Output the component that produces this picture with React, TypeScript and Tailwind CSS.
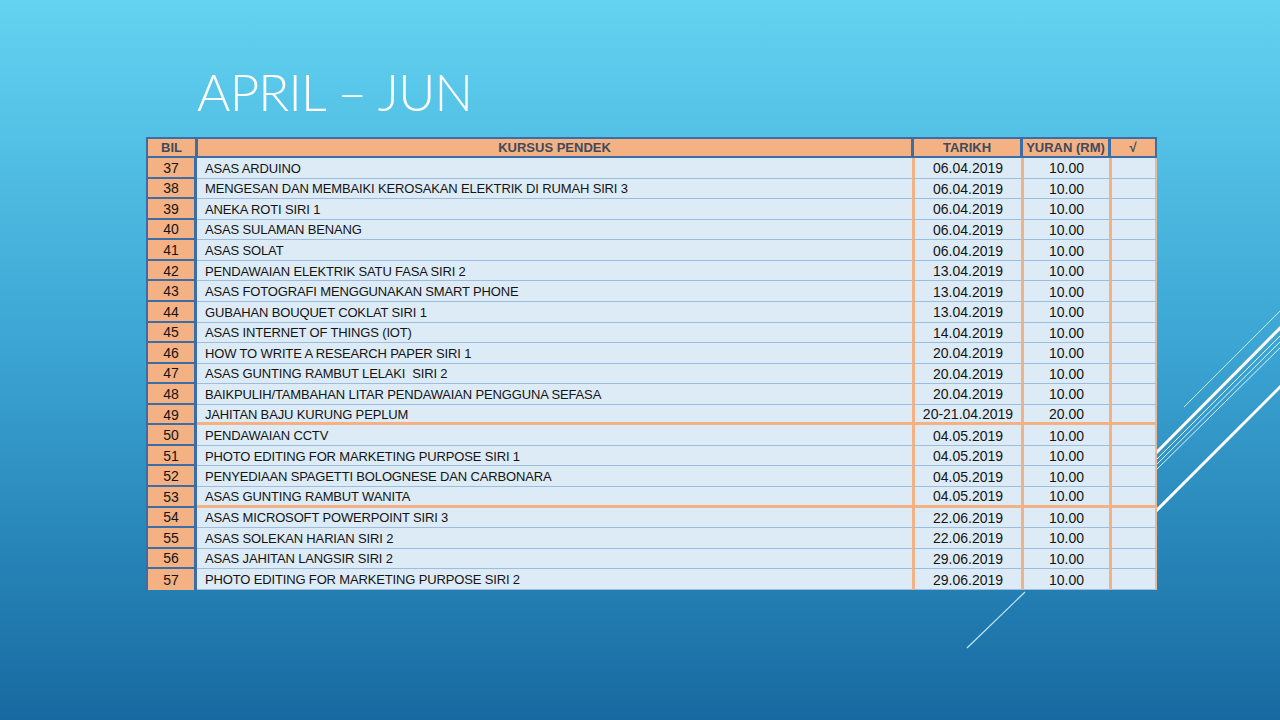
import React from 'react';

type Row = { bil: number; kursus: string; tarikh: string; yuran: string; groupEnd?: boolean };

const rows: Row[] = [
  { bil: 37, kursus: 'ASAS ARDUINO', tarikh: '06.04.2019', yuran: '10.00' },
  { bil: 38, kursus: 'MENGESAN DAN MEMBAIKI KEROSAKAN ELEKTRIK DI RUMAH SIRI 3', tarikh: '06.04.2019', yuran: '10.00' },
  { bil: 39, kursus: 'ANEKA ROTI SIRI 1', tarikh: '06.04.2019', yuran: '10.00' },
  { bil: 40, kursus: 'ASAS SULAMAN BENANG', tarikh: '06.04.2019', yuran: '10.00' },
  { bil: 41, kursus: 'ASAS SOLAT', tarikh: '06.04.2019', yuran: '10.00' },
  { bil: 42, kursus: 'PENDAWAIAN ELEKTRIK SATU FASA SIRI 2', tarikh: '13.04.2019', yuran: '10.00' },
  { bil: 43, kursus: 'ASAS FOTOGRAFI MENGGUNAKAN SMART PHONE', tarikh: '13.04.2019', yuran: '10.00' },
  { bil: 44, kursus: 'GUBAHAN BOUQUET COKLAT SIRI 1', tarikh: '13.04.2019', yuran: '10.00' },
  { bil: 45, kursus: 'ASAS INTERNET OF THINGS (IOT)', tarikh: '14.04.2019', yuran: '10.00' },
  { bil: 46, kursus: 'HOW TO WRITE A RESEARCH PAPER SIRI 1', tarikh: '20.04.2019', yuran: '10.00' },
  { bil: 47, kursus: 'ASAS GUNTING RAMBUT LELAKI  SIRI 2', tarikh: '20.04.2019', yuran: '10.00' },
  { bil: 48, kursus: 'BAIKPULIH/TAMBAHAN LITAR PENDAWAIAN PENGGUNA SEFASA', tarikh: '20.04.2019', yuran: '10.00' },
  { bil: 49, kursus: 'JAHITAN BAJU KURUNG PEPLUM', tarikh: '20-21.04.2019', yuran: '20.00', groupEnd: true },
  { bil: 50, kursus: 'PENDAWAIAN CCTV', tarikh: '04.05.2019', yuran: '10.00' },
  { bil: 51, kursus: 'PHOTO EDITING FOR MARKETING PURPOSE SIRI 1', tarikh: '04.05.2019', yuran: '10.00' },
  { bil: 52, kursus: 'PENYEDIAAN SPAGETTI BOLOGNESE DAN CARBONARA', tarikh: '04.05.2019', yuran: '10.00' },
  { bil: 53, kursus: 'ASAS GUNTING RAMBUT WANITA', tarikh: '04.05.2019', yuran: '10.00', groupEnd: true },
  { bil: 54, kursus: 'ASAS MICROSOFT POWERPOINT SIRI 3', tarikh: '22.06.2019', yuran: '10.00' },
  { bil: 55, kursus: 'ASAS SOLEKAN HARIAN SIRI 2', tarikh: '22.06.2019', yuran: '10.00' },
  { bil: 56, kursus: 'ASAS JAHITAN LANGSIR SIRI 2', tarikh: '29.06.2019', yuran: '10.00' },
  { bil: 57, kursus: 'PHOTO EDITING FOR MARKETING PURPOSE SIRI 2', tarikh: '29.06.2019', yuran: '10.00' },
];

function Decoration() {
  return (
    <svg className="absolute inset-0 z-0" width="1280" height="720" viewBox="0 0 1280 720">
      <line x1="1184" y1="407" x2="1290" y2="301" stroke="#c9eefa" strokeWidth="1" />
      <line x1="1150" y1="459" x2="1290" y2="318" stroke="#ffffff" strokeWidth="3" />
      <line x1="1150" y1="466" x2="1290" y2="326" stroke="#e6f7fd" strokeWidth="1" />
      <line x1="1150" y1="471" x2="1290" y2="332" stroke="#d6f2fb" strokeWidth="1" />
      <line x1="1150" y1="476" x2="1290" y2="338" stroke="#d6f2fb" strokeWidth="1" />
      <line x1="1150" y1="517" x2="1290" y2="377" stroke="#ffffff" strokeWidth="3" />
      <line x1="967" y1="648" x2="1025" y2="592" stroke="#bfeaf8" strokeWidth="1.2" />
    </svg>
  );
}

export default function App() {
  return (
    <div className="relative w-[1280px] h-[720px] overflow-hidden bg-gradient-to-b from-[#63d3f1] via-[#3aa3d2] to-[#176aa1]">
      <Decoration />
      <div className="relative z-10 pt-[64px]">
        <h1
          className="pl-[197px] text-[51px] leading-[56px] font-light text-white tracking-[-0.8px]"
          style={{ fontFamily: 'Lato, "Open Sans", sans-serif' }}
        >
          APRIL – JUN
        </h1>

        <div
          className="ml-[146px] mt-[17px] w-[1011px]"
          style={{ fontFamily: '"Liberation Sans", Arial, sans-serif' }}
        >
          {/* header */}
          <div className="flex h-[21px] bg-[#3b6ea6] p-[2px] gap-x-[3px] text-[13px] leading-none font-bold text-[#404a5c]">
            <div className="w-[47px] shrink-0 bg-[#f4b183] flex items-center justify-center">BIL</div>
            <div className="w-[713px] shrink-0 bg-[#f4b183] flex items-center justify-center">KURSUS PENDEK</div>
            <div className="w-[106px] shrink-0 bg-[#f4b183] flex items-center justify-center">TARIKH</div>
            <div className="w-[85px] shrink-0 bg-[#f4b183] flex items-center justify-center">YURAN (RM)</div>
            <div className="w-[44px] shrink-0 bg-[#f4b183] flex items-center justify-center">√</div>
          </div>

          {/* body */}
          {rows.map((r, i) => {
            const bottom = r.groupEnd
              ? 'border-b-[3px] border-b-[#f4b183]'
              : 'border-b border-b-[#9dbde0]';
            return (
              <div key={r.bil} className="flex h-[20.57px] leading-none text-[#141414]">
                <div
                  className={`w-[51px] shrink-0 bg-[#f4b183] border-l-2 border-r-[3px] border-[#3b6ea6] flex items-center justify-center pt-[1px] text-[14px] ${
                    i === rows.length - 1 ? 'border-b-0' : 'border-b-2'
                  }`}
                >
                  {r.bil}
                </div>
                <div className={`w-[715px] shrink-0 bg-[#ddebf7] flex items-center pl-[8px] pt-[1px] text-[13px] tracking-[-0.15px] whitespace-pre ${bottom}`}>
                  {r.kursus}
                </div>
                <div className={`w-[109px] shrink-0 bg-[#ddebf7] border-l-[3px] border-l-[#f4b183] flex items-center justify-center pt-[1px] text-[14px] ${bottom}`}>
                  {r.tarikh}
                </div>
                <div className={`w-[88px] shrink-0 bg-[#ddebf7] border-l-[3px] border-l-[#f4b183] flex items-center justify-center pt-[1px] text-[14px] ${bottom}`}>
                  {r.yuran}
                </div>
                <div className={`w-[48px] shrink-0 bg-[#ddebf7] border-l-[3px] border-l-[#f4b183] border-r-2 border-r-[#e8b99a] ${bottom}`} />
              </div>
            );
          })}
        </div>
      </div>
    </div>
  );
}
